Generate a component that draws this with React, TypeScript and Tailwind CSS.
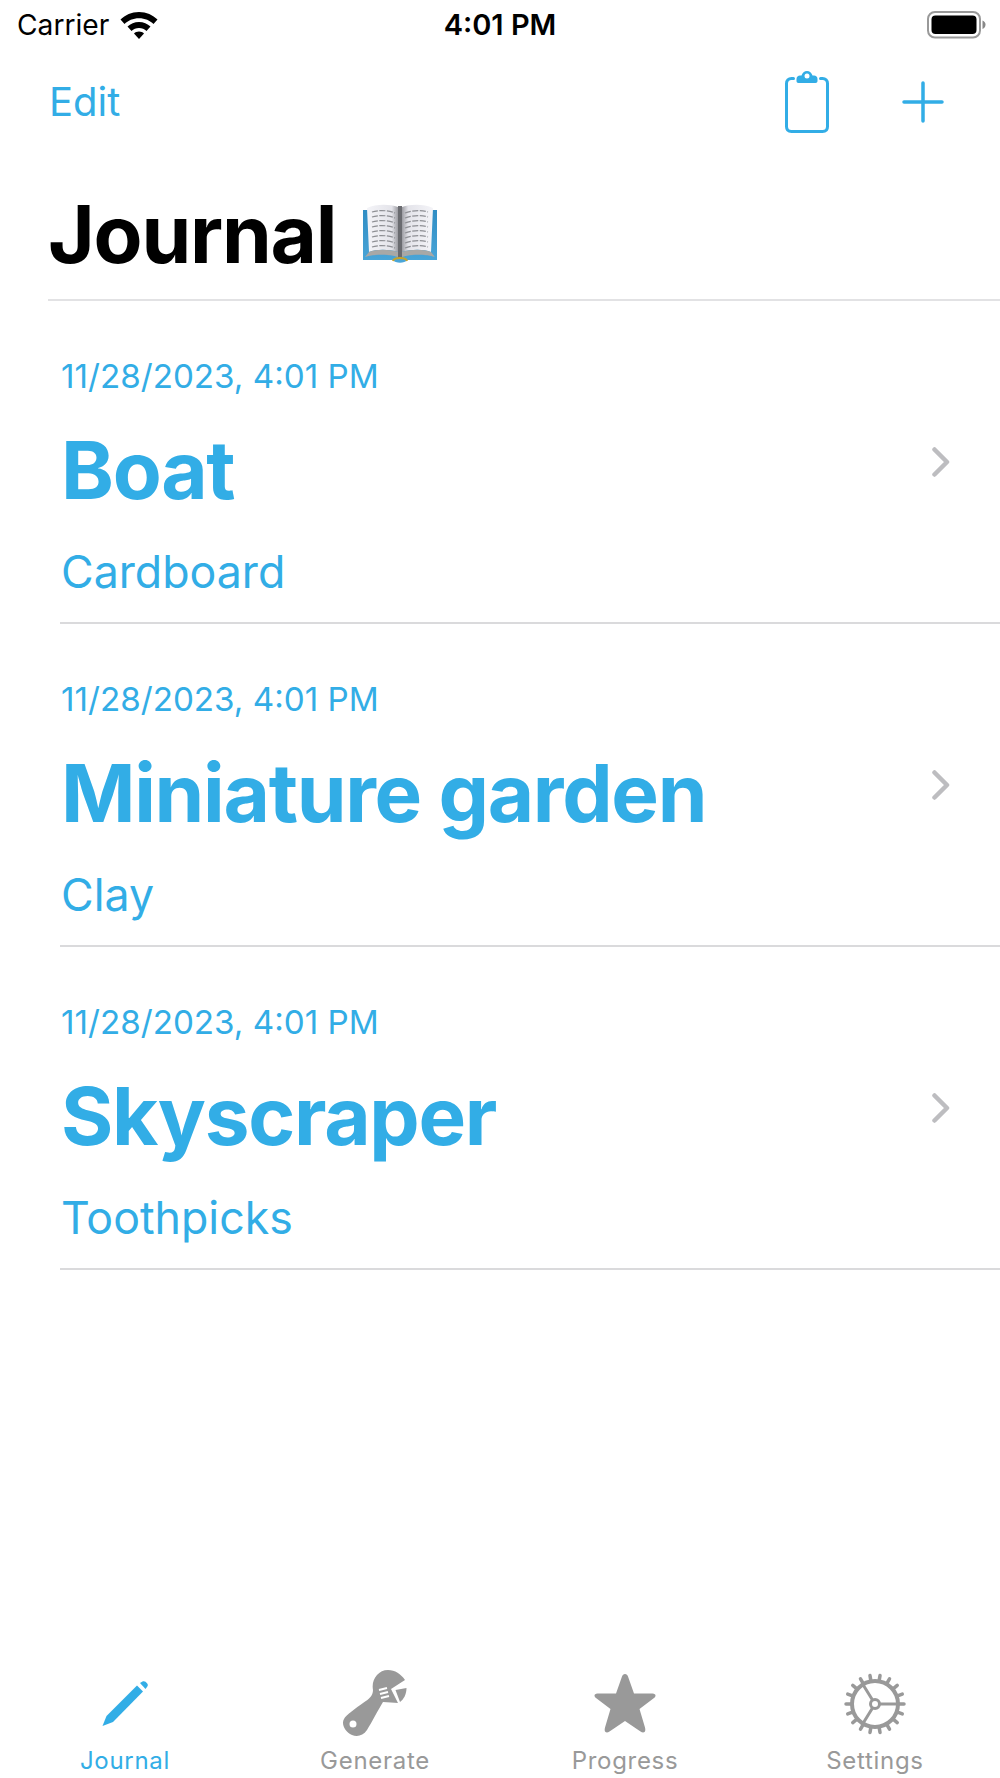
const entries = [
    { date: '11/28/2023, 4:01 PM', title: 'Boat', material: 'Cardboard' },
    { date: '11/28/2023, 4:01 PM', title: 'Miniature garden', material: 'Clay' },
    { date: '11/28/2023, 4:01 PM', title: 'Skyscraper', material: 'Toothpicks' },
];

function WifiIcon() {
    return (
        <svg width="38" height="27" viewBox="0 0 38 27" fill="#000">
            <path d="M19 0C26.500 0 32.800 3 37.500 7.500L33.500 12C30 8.500 25 6.200 19 6.200C13 6.200 8 8.500 4.500 12L0.500 7.500C5.200 3 11.500 0 19 0Z" />
            <path d="M19 10C23.500 10 27.500 11.700 30.500 14.600L26.500 19C24.500 17.200 22 16 19 16C16 16 13.500 17.200 11.500 19L7.500 14.600C10.500 11.700 14.500 10 19 10Z" />
            <path d="M19 19.500C21 19.500 22.600 20.200 24 21.400L19 27L14 21.400C15.400 20.200 17 19.500 19 19.500Z" />
        </svg>
    );
}

function BatteryIcon() {
    return (
        <svg width="60" height="28" viewBox="0 0 60 28">
            <rect x="1" y="1" width="52" height="25.500" rx="7" fill="none" stroke="#999" strokeWidth="2" />
            <rect x="4.500" y="4.500" width="45" height="18.500" rx="4" fill="#000" />
            <path d="M55.500 9.500C57.500 10.200 58.500 11.800 58.500 13.700C58.500 15.600 57.500 17.200 55.500 18Z" fill="#888" />
        </svg>
    );
}

function ClipboardIcon() {
    return (
        <svg width="44" height="62" viewBox="0 0 44 62" fill="none">
            <path d="M8.500 7.500H6.500C3.500 7.500 1.500 9.500 1.500 12.500V55.500C1.500 58.700 3.500 60.500 6.500 60.500H37.500C40.500 60.500 42.500 58.700 42.500 55.500V12.500C42.500 9.500 40.500 7.500 37.500 7.500H35.500" stroke="#32ADE6" strokeWidth="3" strokeLinecap="round" />
            <path d="M11.500 10V8C11.500 6 13 4.500 15 4.500H16.500C17.300 1.800 19.400 0 22 0C24.600 0 26.700 1.800 27.500 4.500H29C31 4.500 32.500 6 32.500 8V10C32.500 11.300 31.800 12 30.500 12H13.500C12.200 12 11.500 11.300 11.500 10Z" fill="#32ADE6" />
            <circle cx="22" cy="5" r="2.500" fill="#fff" />
        </svg>
    );
}

function BookEmoji() {
    const lines = [0, 1, 2, 3, 4, 5, 6, 7];
    return (
        <svg width="76" height="60" viewBox="0 0 76 60">
            <defs>
                <linearGradient id="page" x1="0" y1="0" x2="1" y2="0">
                    <stop offset="0" stopColor="#F4F4F8" />
                    <stop offset="0.8" stopColor="#E4E4EA" />
                    <stop offset="1" stopColor="#9C9CA2" />
                </linearGradient>
                <linearGradient id="pageRight" x1="1" y1="0" x2="0" y2="0">
                    <stop offset="0" stopColor="#F4F4F8" />
                    <stop offset="0.8" stopColor="#E4E4EA" />
                    <stop offset="1" stopColor="#9C9CA2" />
                </linearGradient>
                <linearGradient id="cover" x1="0" y1="0" x2="0" y2="1">
                    <stop offset="0" stopColor="#2F8DC4" />
                    <stop offset="1" stopColor="#4BA6D8" />
                </linearGradient>
            </defs>
            <path d="M1 6H75V56H45C43 59.500 33 59.500 31 56H1Z" fill="url(#cover)" />
            <path d="M5 4C14 0 27 0 36 3V48C27 45 14 45 7 48Z" fill="url(#page)" />
            <path d="M71 4C62 0 49 0 40 3V48C49 45 62 45 69 48Z" fill="url(#pageRight)" />
            <path d="M7 48C14 45 27 45 36 48V53C27 50 12 50 3 53Z" fill="#A8A8A6" />
            <path d="M69 48C62 45 49 45 40 48V53C49 50 64 50 73 53Z" fill="#A8A8A6" />
            <rect x="36" y="2" width="4" height="52" fill="#6A6B70" />
            <path d="M31 57C32 53 44 53 45 57" fill="none" stroke="#C6A32C" strokeWidth="2" />
            {lines.map((i) => (
                <g key={i} stroke="#8E8F94" strokeWidth="1.200" strokeDasharray="6 1.500" fill="none">
                    <path d={`M10 ${8 + i * 5}C16 ${6 + i * 5} 26 ${6 + i * 5} 33 ${9 + i * 5}`} />
                    <path d={`M43 ${9 + i * 5}C50 ${6 + i * 5} 60 ${6 + i * 5} 66 ${8 + i * 5}`} />
                </g>
            ))}
        </svg>
    );
}

function PencilIcon() {
    return (
        <svg width="46" height="46" viewBox="0 0 46 46" fill="#32ADE6">
            <path d="M0.500 45L4.500 35L35 4.500L41 10.500L11 41Z" />
            <path d="M38 2L40.500 0.500C41.500 0 42.500 0 43.500 0.800L45 2.300C46 3.500 46 4.500 45.300 5.500L43.500 8Z" />
        </svg>
    );
}

function WrenchIcon() {
    return (
        <svg width="66" height="68" viewBox="0 0 66 68">
            <path
                fillRule="evenodd"
                fill="#999"
                d="M46 0C53 0 59 4 63 10L49 19L56 33C52 33 46 32 41 32C36 40 30 52 25 60C21 66 15 67 10 65C3 62 -1 54 2 49C4 45 14 38 21 33C27 29 31 26 31 20C29 10 36 0 46 0Z M11 50.500A3.500 3.500 0 1 0 11 57.500A3.500 3.500 0 1 0 11 50.500Z"
            />
            <path d="M53.500 20L64.500 18C64.500 24 62 29 58 32Z" fill="#999" />
            <path d="M37 20L45 18M38 24L46 22M39 28L47 26" stroke="#fff" strokeWidth="2" fill="none" />
        </svg>
    );
}

function StarIcon() {
    return (
        <svg width="62" height="60" viewBox="0 0 62 60" fill="#999">
            <path d="M31 0C32.500 0 33.500 1 34 2.500L40 19.500H58.500C60.500 19.500 61.500 20.500 61.500 21.500C61.500 22.500 61 23.200 60 24L45.500 35L51 53.500C51.500 55.500 51.500 57 50.500 58C49.500 58.800 48 58.500 46.500 57.500L31 47L15.500 57.500C14 58.500 12.500 58.800 11.500 58C10.500 57 10.500 55.500 11 53.500L16.500 35L2 24C1 23.200 0.500 22.500 0.500 21.500C0.500 20.500 1.500 19.500 3.500 19.500H22L28 2.500C28.500 1 29.500 0 31 0Z" />
        </svg>
    );
}

function GearIcon() {
    const teeth = Array.from({ length: 18 }, (_, i) => i * 20);
    return (
        <svg width="62" height="62" viewBox="0 0 62 62" fill="none" stroke="#999">
            {teeth.map((deg) => (
                <path key={deg} d="M31 7V2" strokeWidth="3.500" strokeLinecap="round" transform={`rotate(${deg + 10} 31 31)`} />
            ))}
            <circle cx="31" cy="31" r="23" strokeWidth="4" />
            <circle cx="31" cy="31" r="4.500" strokeWidth="3" />
            <path d="M36 31H54M28.500 27L18 10M28.500 35L18 52" strokeWidth="3" />
        </svg>
    );
}

function TabItem({ label, active, icon }: { label: string; active?: boolean; icon: React.ReactNode }) {
    return (
        <div className="flex-1 flex flex-col items-center">
            <div className="h-[66px] flex items-center justify-center">{icon}</div>
            <span className={`mt-[7px] text-[24px] leading-[34px] tracking-[0.7px] ${active ? 'text-[#32ADE6]' : 'text-[#999999]'}`}>
                {label}
            </span>
        </div>
    );
}

export default function App() {
    return (
        <div className="w-[1000px] h-[1778px] bg-white flex flex-col overflow-hidden font-['Inter',sans-serif]">
            <div className="h-[50px] shrink-0 grid grid-cols-[1fr_auto_1fr] items-center px-[17px] text-black">
                <div className="flex items-center gap-[11px]">
                    <span className="text-[28.200px] leading-[50px]">Carrier</span>
                    <WifiIcon />
                </div>
                <span className="text-[29px] leading-[50px] font-semibold">4:01 PM</span>
                <div className="flex justify-end mr-[-4px]">
                    <BatteryIcon />
                </div>
            </div>

            <div className="h-[104px] shrink-0 flex items-center justify-between pl-[49px] pr-[56px] text-[#32ADE6]">
                <span className="text-[40px] leading-[50px]">Edit</span>
                <div className="flex items-center gap-[73px]">
                    <ClipboardIcon />
                    <svg width="42" height="42" viewBox="0 0 42 42" stroke="#32ADE6" strokeWidth="3.500" strokeLinecap="round">
                        <path d="M21 2V40M2 21H40" />
                    </svg>
                </div>
            </div>

            <div className="ml-[48px] h-[147px] shrink-0 border-b-2 border-[#E2E2E4] flex items-center gap-[26px] pt-[14px]">
                <span className="text-[80px] leading-[100px] font-bold tracking-[-1.200px] text-black">Journal</span>
                <BookEmoji />
            </div>

            {entries.map((entry) => (
                <div key={entry.title} className="ml-[60px] h-[323px] shrink-0 border-b-2 border-[#DADADC] flex items-center justify-between pr-[50px] text-[#32ADE6]">
                    <div className="flex flex-col pt-[32px] pl-[1px]">
                        <span className="text-[33.200px] leading-[40px]">{entry.date}</span>
                        <span className="mt-[24px] text-[80px] leading-[100px] font-bold tracking-[-1.300px]">{entry.title}</span>
                        <span className="mt-[24px] text-[44.700px] leading-[56px]">{entry.material}</span>
                    </div>
                    <svg width="18" height="30" viewBox="0 0 18 30" fill="none" stroke="#BDBDC0" strokeWidth="4.500" strokeLinecap="round" strokeLinejoin="round">
                        <path d="M2.500 2.500L15 15L2.500 27.500" />
                    </svg>
                </div>
            ))}

            <div className="mt-auto flex">
                <TabItem label="Journal" active icon={<PencilIcon />} />
                <TabItem label="Generate" icon={<WrenchIcon />} />
                <TabItem label="Progress" icon={<StarIcon />} />
                <TabItem label="Settings" icon={<GearIcon />} />
            </div>
        </div>
    );
}
